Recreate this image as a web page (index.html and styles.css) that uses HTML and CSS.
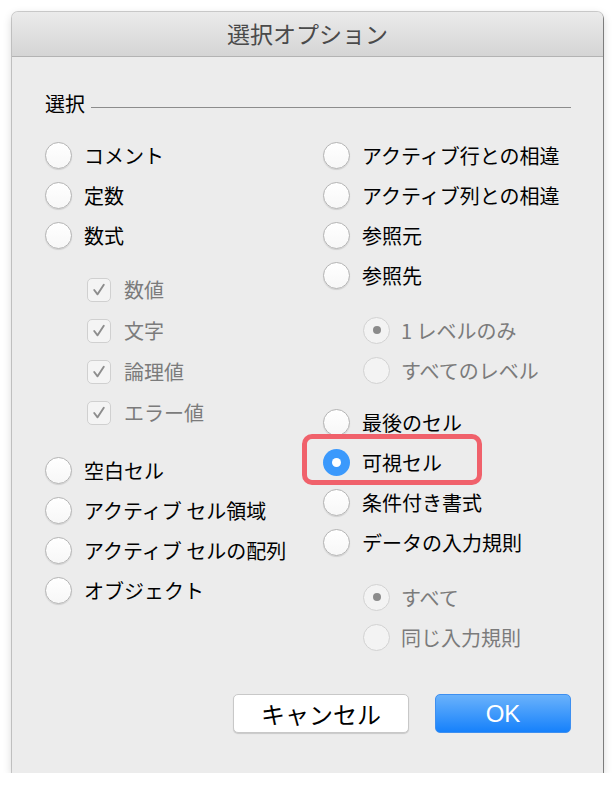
FILE: index.html
```html
<!DOCTYPE html>
<html lang="ja">
<head>
    <meta charset="UTF-8">
    <meta name="viewport" content="width=device-width, initial-scale=1.0">
    <title>選択オプション</title>
    <link rel="stylesheet" href="styles.css">
</head>
<body>
    <div class="dialog">
        <div class="titlebar">選択オプション</div>
        <div class="content">
            <div class="group_head">
                <span>選択</span>
                <i class="rule"></i>
            </div>
            <div class="cols">
                <!-- 左の列 -->
                <div class="col">
                    <div class="opt"><span class="radio"></span>コメント</div>
                    <div class="opt"><span class="radio"></span>定数</div>
                    <div class="opt"><span class="radio"></span>数式</div>
                    <div class="sub sub_check">
                        <div class="opt dim"><span class="check"><svg viewBox="0 0 23 23"><polyline points="6.5,11.5 10,16 16.5,6"/></svg></span>数値</div>
                        <div class="opt dim"><span class="check"><svg viewBox="0 0 23 23"><polyline points="6.5,11.5 10,16 16.5,6"/></svg></span>文字</div>
                        <div class="opt dim"><span class="check"><svg viewBox="0 0 23 23"><polyline points="6.5,11.5 10,16 16.5,6"/></svg></span>論理値</div>
                        <div class="opt dim"><span class="check"><svg viewBox="0 0 23 23"><polyline points="6.5,11.5 10,16 16.5,6"/></svg></span>エラー値</div>
                    </div>
                    <div class="block_after_check">
                        <div class="opt"><span class="radio"></span>空白セル</div>
                        <div class="opt"><span class="radio"></span>アクティブ セル領域</div>
                        <div class="opt"><span class="radio"></span>アクティブ セルの配列</div>
                        <div class="opt"><span class="radio"></span>オブジェクト</div>
                    </div>
                </div>
                <!-- 右の列 -->
                <div class="col">
                    <div class="opt"><span class="radio"></span>アクティブ行との相違</div>
                    <div class="opt"><span class="radio"></span>アクティブ列との相違</div>
                    <div class="opt"><span class="radio"></span>参照元</div>
                    <div class="opt"><span class="radio"></span>参照先</div>
                    <div class="sub">
                        <div class="opt dim"><span class="radio on"></span>1 レベルのみ</div>
                        <div class="opt dim"><span class="radio"></span>すべてのレベル</div>
                    </div>
                    <div class="block_after_sub">
                        <div class="opt"><span class="radio"></span>最後のセル</div>
                        <div class="opt marked"><span class="radio selected"></span>可視セル</div>
                        <div class="opt"><span class="radio"></span>条件付き書式</div>
                        <div class="opt"><span class="radio"></span>データの入力規則</div>
                    </div>
                    <div class="sub">
                        <div class="opt dim"><span class="radio on"></span>すべて</div>
                        <div class="opt dim"><span class="radio"></span>同じ入力規則</div>
                    </div>
                </div>
            </div>
            <div class="buttons">
                <a href="javascript:;" class="btn btn_cancel">キャンセル</a>
                <a href="javascript:;" class="btn btn_ok">OK</a>
            </div>
        </div>
    </div>
</body>
</html>
```

FILE: styles.css
```css
*, *::before, *::after{
    margin: 0;
    padding: 0;
    box-sizing: border-box;
}
body{
    background-color: #fff;
    font-family: "Noto Sans CJK JP", "Liberation Sans", sans-serif;
}
.dialog{
    width: 591px;
    height: 761px;
    margin: 12px 0 0 12px;
    background-color: #ececec;
    border-radius: 6px 6px 0 0;
    box-shadow: 0 0 0 1px rgba(0,0,0,0.18), 1px 1px 0 0 rgba(0,0,0,0.35), 0 3px 10px rgba(0,0,0,0.18);
    display: flex;
    flex-direction: column;
}
.titlebar{
    height: 45px;
    line-height: 43px;
    text-align: center;
    font-size: 23px;
    color: #4a4a4a;
    background: linear-gradient(#ebebeb, #d5d5d5);
    border-bottom: 1px solid #b3b3b3;
    border-radius: 6px 6px 0 0;
}
.content{
    flex: 1;
    display: flex;
    flex-direction: column;
    padding: 0 32px 0 33px;
}
.group_head{
    display: flex;
    align-items: center;
    height: 24px;
    margin-top: 34px;
    font-size: 20px;
    color: #000;
}
.group_head .rule{
    flex: 1;
    height: 1px;
    background-color: #8c8c8c;
    margin: 9px 0 0 6px;
}
.cols{
    display: grid;
    grid-template-columns: 278px 1fr;
    margin-top: 20px;
}
.opt{
    display: flex;
    align-items: center;
    height: 40px;
    font-size: 20px;
    color: #000;
    white-space: nowrap;
}
.radio{
    width: 27px;
    height: 27px;
    margin-right: 12px;
    border-radius: 50%;
    border: 1px solid #b4b4b4;
    background: linear-gradient(#fff, #f7f7f7);
    box-shadow: 0 1px 1px rgba(0,0,0,0.12);
    display: flex;
    align-items: center;
    justify-content: center;
    flex-shrink: 0;
}
.dim{
    color: #7b7b7b;
}
.dim .radio{
    border-color: #d2d2d2;
    background: #f3f3f3;
    box-shadow: none;
}
.radio.on::after{
    content: "";
    width: 8px;
    height: 8px;
    border-radius: 50%;
    background-color: #8b8b8b;
}
.radio.selected{
    border: none;
    background-color: #3b99fc;
    background-image: none;
    box-shadow: none;
}
.radio.selected::after{
    content: "";
    width: 9px;
    height: 9px;
    border-radius: 50%;
    background-color: #fff;
}
.sub{
    margin: 15px 0 0 40px;
}
.sub .radio{
    margin-right: 11px;
}
.sub_check{
    margin: 14px 0 0 42px;
}
.sub_check .opt{
    height: 41px;
}
.check{
    width: 24px;
    height: 24px;
    margin-right: 13px;
    border: 1px solid #d0d0d0;
    border-radius: 5px;
    background-color: #f4f4f4;
    flex-shrink: 0;
}
.check svg{
    display: block;
    width: 22px;
    height: 22px;
}
.check polyline{
    fill: none;
    stroke: #8d8d8d;
    stroke-width: 2;
    stroke-linecap: round;
    stroke-linejoin: round;
}
.block_after_check{
    margin-top: 17px;
}
.block_after_sub{
    margin-top: 12px;
}
/* 赤い枠 */
.marked{
    position: relative;
}
.marked::before{
    content: "";
    position: absolute;
    left: -21px;
    top: -8px;
    width: 180px;
    height: 51px;
    border: 5px solid #f0616b;
    border-radius: 10px;
}
.buttons{
    margin-top: auto;
    margin-bottom: 40px;
    display: flex;
    justify-content: flex-end;
    gap: 26px;
}
.btn{
    display: block;
    height: 39px;
    line-height: 37px;
    text-align: center;
    font-size: 24px;
    text-decoration: none;
    border-radius: 5px;
}
.btn_cancel{
    width: 176px;
    color: #000;
    background-color: #fff;
    border: 1px solid #c8c8c8;
    box-shadow: 0 1px 1px rgba(0,0,0,0.15);
}
.btn_ok{
    width: 136px;
    color: #fff;
    font-family: "Liberation Sans", sans-serif;
    font-size: 24px;
    background: linear-gradient(#6ab2fb, #1681fb);
    border: 1px solid #3d8ff0;
}
```
